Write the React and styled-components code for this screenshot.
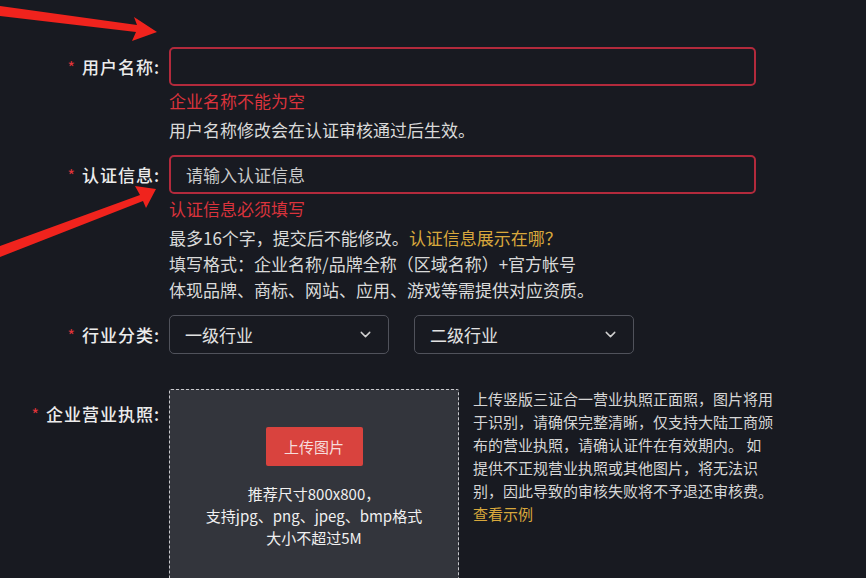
import React from "react";
import styled, { createGlobalStyle } from "styled-components";
import { ChevronDown } from "lucide-react";

const GlobalStyle = createGlobalStyle`
  html, body {
    margin: 0;
    background: #181a21;
  }
  body {
    font-family: "Noto Sans CJK SC", "Noto Sans", sans-serif;
    color: #e6e6e6;
  }
`;

const App = () => {
  return (
    <Root>
      <GlobalStyle />
      <Arrows width="170" height="270" viewBox="0 0 170 270">
        <polygon points="0,6 137,25 134,17 157,32 132,41 136,32 0,16" fill="#f0231d" />
        <polygon points="0,246 140,195 135,186 156,189 146,208 143,201 0,257" fill="#f0231d" />
      </Arrows>
      <Form>
        <Row>
          <Label><Star>*</Star>用户名称:</Label>
          <Field>
            <TextInput $error />
            <ErrorText>企业名称不能为空</ErrorText>
            <Help>用户名称修改会在认证审核通过后生效。</Help>
          </Field>
        </Row>
        <Row>
          <Label><Star>*</Star>认证信息:</Label>
          <Field>
            <TextInput $error placeholder="请输入认证信息" />
            <ErrorText>认证信息必须填写</ErrorText>
            <Help>
              最多16个字，提交后不能修改。<Link>认证信息展示在哪？</Link>
            </Help>
            <Help>填写格式：企业名称/品牌全称（区域名称）+官方帐号</Help>
            <Help>体现品牌、商标、网站、应用、游戏等需提供对应资质。</Help>
          </Field>
        </Row>
        <Row>
          <Label><Star>*</Star>行业分类:</Label>
          <SelectGroup>
            <Select>
              一级行业
              <ChevronDown size={17} strokeWidth={2} />
            </Select>
            <Select>
              二级行业
              <ChevronDown size={17} strokeWidth={2} />
            </Select>
          </SelectGroup>
        </Row>
        <UploadRow>
          <Label $top><Star>*</Star>企业营业执照:</Label>
          <UploadArea>
            <UploadBox>
              <UploadButton>上传图片</UploadButton>
              <UploadHint>
                推荐尺寸800x800，
                <br />
                支持jpg、png、jpeg、bmp格式
                <br />
                大小不超过5M
              </UploadHint>
            </UploadBox>
            <Notice>
              上传竖版三证合一营业执照正面照，图片将用于识别，请确保完整清晰，仅支持大陆工商颁布的营业执照，请确认证件在有效期内。 如提供不正规营业执照或其他图片，将无法识别，因此导致的审核失败将不予退还审核费。
              <br />
              <Link>查看示例</Link>
            </Notice>
          </UploadArea>
        </UploadRow>
      </Form>
    </Root>
  );
};

export default App;

const Root = styled.div`
  position: relative;
  width: 866px;
  height: 578px;
  overflow: hidden;
  background: #181a21;
`;

const Arrows = styled.svg`
  position: absolute;
  left: 0;
  top: 0;
`;

const Form = styled.div`
  display: flex;
  flex-direction: column;
  padding-top: 47px;
`;

const Row = styled.div`
  display: grid;
  grid-template-columns: 160px 587px;
  column-gap: 9px;
  margin-bottom: 12px;
`;

const UploadRow = styled(Row)`
  margin-top: 23px;
  grid-template-columns: 160px 620px;
`;

const Label = styled.div`
  display: flex;
  justify-content: flex-end;
  align-items: center;
  height: ${(p) => (p.$top ? "auto" : "39px")};
  padding-top: ${(p) => (p.$top ? "14px" : "0")};
  align-self: start;
  font-size: 17px;
  font-weight: 500;
  letter-spacing: 1px;
  line-height: 22px;
  color: #ececec;
`;

const Star = styled.span`
  color: #e0343a;
  font-size: 16px;
  font-weight: 400;
  margin-right: 6px;
`;

const Field = styled.div`
  display: flex;
  flex-direction: column;
`;

const TextInput = styled.input`
  box-sizing: border-box;
  width: 587px;
  height: 39px;
  padding: 0 15px;
  background: #181a21;
  border: 2px solid ${(p) => (p.$error ? "#b22a3c" : "#4a4c55")};
  border-radius: 5px;
  outline: none;
  font-family: inherit;
  font-size: 17px;
  color: #e6e6e6;
  &::placeholder {
    color: #c9c9c9;
  }
`;

const ErrorText = styled.div`
  margin-top: 2px;
  font-size: 17px;
  line-height: 26px;
  color: #da333c;
`;

const Help = styled.div`
  font-size: 17px;
  line-height: 26px;
  color: #dadada;
  &:first-of-type,
  ${ErrorText} + & {
    margin-top: 3px;
  }
`;

const Link = styled.span`
  color: #d8a83c;
  cursor: pointer;
`;

const SelectGroup = styled.div`
  display: flex;
  gap: 25px;
`;

const Select = styled.div`
  box-sizing: border-box;
  width: 220px;
  height: 39px;
  padding: 0 14px 0 15px;
  display: flex;
  align-items: center;
  justify-content: space-between;
  border: 1px solid #50525b;
  border-radius: 5px;
  font-size: 17px;
  color: #e2e2e2;
  svg {
    color: #d0d0d0;
  }
`;

const UploadArea = styled.div`
  display: flex;
  gap: 14px;
  align-items: flex-start;
`;

const UploadBox = styled.div`
  box-sizing: border-box;
  width: 290px;
  height: 200px;
  flex-shrink: 0;
  display: flex;
  flex-direction: column;
  align-items: center;
  padding-top: 37px;
  background: #33353c;
  border: 1px dashed #c8c8cc;
  border-radius: 2px;
`;

const UploadButton = styled.button`
  width: 97px;
  height: 39px;
  border: none;
  border-radius: 2px;
  background: #d9433e;
  color: #f6dcdc;
  font-family: inherit;
  font-size: 15px;
  cursor: pointer;
`;

const UploadHint = styled.div`
  margin-top: 17px;
  text-align: center;
  font-size: 15px;
  line-height: 22px;
  color: #f0f0f0;
`;

const Notice = styled.div`
  width: 301px;
  margin-top: -2px;
  font-size: 15px;
  line-height: 23px;
  color: #d6d6d6;
`;
